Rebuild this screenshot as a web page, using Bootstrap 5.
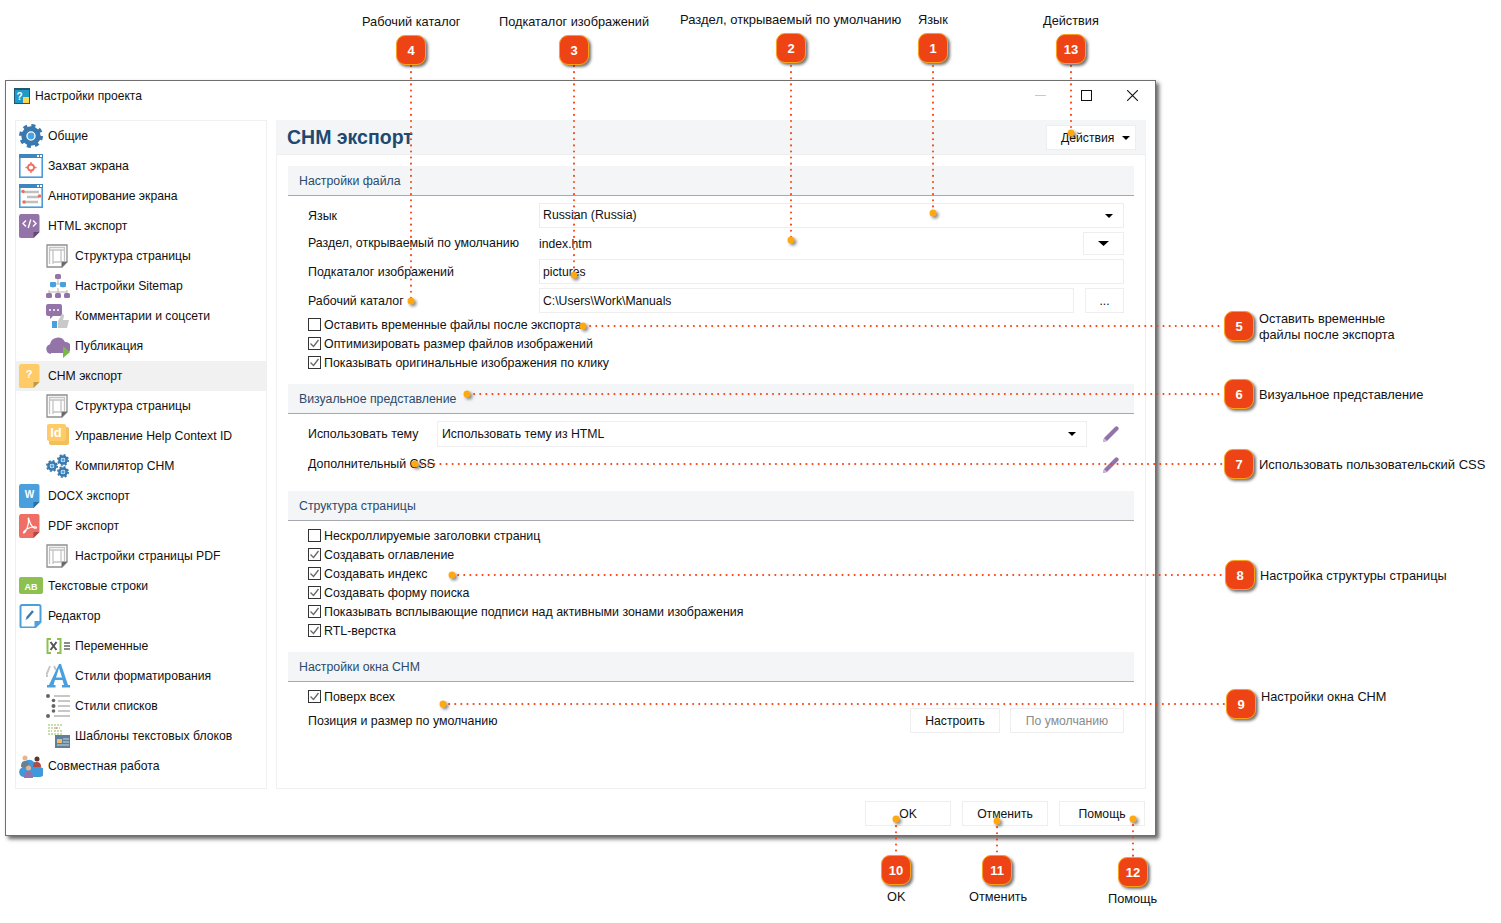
<!DOCTYPE html>
<html lang="ru">

<head>
  <meta charset="UTF-8">
  <title>Настройки проекта</title>
  <link href="https://cdn.jsdelivr.net/npm/bootstrap@5.3.3/dist/css/bootstrap.min.css" rel="stylesheet">
  <style>
    html, body { height: 923px; overflow: hidden; background: #fff; }
    body { position: relative; margin: 0; font-family: "Liberation Sans", Arial, sans-serif; font-size: 12.1px; color: #111; }

    /* dialog */
    .dlg { width: 1151px; height: 756px; margin: 80px 0 0 5px; background: #fff; border: 1px solid #6f6f6f; box-shadow: 3px 3px 4px rgba(0, 0, 0, .6); }
    .dlg-title { height: 39px; padding: 0 17px 9px 8px; }
    .dlg-title .ttl-ico { width: 16px; height: 16px; margin-right: 5px; }
    .wnd-btn { width: 11px; height: 11px; margin: 0 0 2px 35px; }
    .dlg-body { height: 669px; padding-left: 9px; gap: 9px; }
    .dlg-foot { padding: 12px 10px 0 0; gap: 11px; }
    .dlg-foot .btn { width: 86px; }

    /* left tree */
    .side { width: 252px; border: 1px solid #f0f0f0; }
    .side .list-group-item { height: 30px; padding: 0 0 0 3px; border: 0; background: transparent; color: #111; font-size: 12.2px; gap: 5px; }
    .side .list-group-item.sub { padding-left: 30px; }
    .side .list-group-item.cur { background: #f1f1f1; }
    .side svg { width: 24px; height: 24px; flex: none; }

    /* right panel */
    .pane { width: 870px; border: 1px solid #f0f0f0; border-top: 0; font-size: 12.4px; }
    .pane-head { height: 35px; margin: 0 -1px; padding: 0 10px; background: #f4f5f7; border-bottom: 1px solid #eee; }
    .pane-head h1 { margin: 1px 0 0 1px; font-size: 19.5px; font-weight: 700; color: #1f4a6f; font-family: "Liberation Sans", Arial, sans-serif; }
    .pane-body { padding: 11px 11px 0; }
    .sec-head { height: 30px; padding-left: 11px; background: #f4f5f7; border-bottom: 1px solid #a5a8ad; color: #2b4a6b; line-height: 30px; font-size: 12.3px; }
    .sec { padding: 0 10px 12px 20px; }
    .sec-a { padding-top: 7px; }
    .sec-b { padding-top: 5px; }
    .frow { min-height: 25px; margin-bottom: 4px; }
    .frow.short { min-height: 23px; }
    .frow.last { margin-bottom: 2px; }
    .lbl-w { width: 231px; flex: none; padding-top: 2px; }
    .lbl-w.raz { padding-top: 0; }
    .lbl-n { width: 129px; flex: none; }
    .css-row { margin-top: 5px; margin-bottom: 2px; }

    .form-control, .form-select { height: 25px; min-height: 25px; padding: 0 3px; border: 1px solid #eee; border-radius: 0; font-size: 12.2px; color: #111; font-family: inherit; box-shadow: none; }
    .form-select { font-size: 12.3px; padding-right: 20px; background-size: 8px 4px; background-position: right 10px center; background-image: url("data:image/svg+xml,%3csvg xmlns='http://www.w3.org/2000/svg' viewBox='0 0 8 4'%3e%3cpath d='M0 0h8L4 4z' fill='%23000'/%3e%3c/svg%3e"); }
    .form-control.plain { border: 0; padding-left: 0; height: 23px; min-height: 23px; }
    .sel-theme { height: 26px; padding-left: 4px; }
    .btn-flat { height: 25px; padding: 1px 0 0; border: 1px solid #eee; border-radius: 0; background: #fff; color: #111; font-size: 12.2px; line-height: 22px; }
    .btn-flat:disabled { opacity: 1; color: #8a8a8a; border-color: #eee; }
    .btn-drop { width: 41px; height: 23px; padding: 0; }
    .btn-drop svg { width: 11px; height: 5px; display: block; margin: 0 auto; }
    .btn-more { width: 39px; margin-left: 11px; }
    .btn-act { width: 90px; background: #fff; padding-left: 14px; text-align: left; }
    .btn-act svg { width: 8px; height: 4px; margin: 0 0 1px 8px; }
    .btn-cfg { width: 90px; }
    .btn-def { width: 114px; margin-left: 10px; }
    .pen { width: 18px; height: 18px; flex: none; margin: 0 4px 0 15px; }
    .chk { height: 19px; gap: 3px; padding-top: 2px; }
    .chk .form-check-input { width: 13px; height: 13px; margin: -2px 0 0; border: 1px solid #333; border-radius: 0; background-size: 11px 11px; box-shadow: none; }
    .chk .form-check-input:checked { background-color: #fff; border-color: #333; background-image: url("data:image/svg+xml,%3csvg xmlns='http://www.w3.org/2000/svg' viewBox='0 0 11 11'%3e%3cpath d='M1.5 5.5l3 3 5-6.5' fill='none' stroke='%23666' stroke-width='1.3'/%3e%3c/svg%3e"); }
    .pos-row { margin-top: 2px; }
    .pos-row > span { padding-top: 1px; }

    /* callouts lying over the screenshot */
    .ln-layer { position: absolute; left: 0; top: 0; width: 1501px; height: 923px; pointer-events: none; }
    .ln-layer line { stroke: #ff3f10; stroke-width: 2; stroke-linecap: round; stroke-dasharray: .1 6; }
    .ln-layer circle { fill: #ffa80f; filter: drop-shadow(2px 2px 1.5px rgba(0, 0, 0, .45)); }
    .mk { position: absolute; width: 30px; height: 30px; border: 1px solid #f9a11b; border-radius: 9px; background: #ee4415; color: #fff; font-weight: 700; font-size: 13px; padding-top: 1px; box-shadow: 2px 2px 3px rgba(0, 0, 0, .55); }
    .cp { position: absolute; font-size: 12.75px; line-height: 16px; color: #111; white-space: nowrap; }

    .mk-1 { left: 918px; top: 33px; } .mk-2 { left: 776px; top: 33px; } .mk-3 { left: 559px; top: 35px; } .mk-4 { left: 396px; top: 35px; }
    .mk-5 { left: 1224px; top: 311px; } .mk-6 { left: 1224px; top: 379px; } .mk-7 { left: 1224px; top: 449px; } .mk-8 { left: 1225px; top: 560px; }
    .mk-9 { left: 1226px; top: 689px; } .mk-10 { left: 881px; top: 855px; } .mk-11 { left: 982px; top: 855px; } .mk-12 { left: 1118px; top: 857px; } .mk-13 { left: 1056px; top: 34px; }

    .cp-1 { left: 918px; top: 12px; } .cp-2 { left: 680px; top: 12px; font-size: 13px; } .cp-3 { left: 499px; top: 14px; } .cp-4 { left: 362px; top: 14px; }
    .cp-5 { left: 1259px; top: 311px; } .cp-6 { left: 1259px; top: 387px; font-size: 12.85px; } .cp-7 { left: 1259px; top: 457px; font-size: 13px; } .cp-8 { left: 1260px; top: 568px; }
    .cp-9 { left: 1261px; top: 689px; } .cp-10 { left: 887px; top: 889px; } .cp-11 { left: 969px; top: 889px; } .cp-12 { left: 1108px; top: 891px; } .cp-13 { left: 1043px; top: 13px; }
  </style>
</head>

<body>
  <!-- общие иконки -->
  <svg width="0" height="0" class="d-block position-absolute">
    <defs>
      <symbol id="i-gear" viewBox="0 0 24 24">
        <circle cx="12" cy="12" r="7.2" fill="none" stroke="#3a78ad" stroke-width="5"/>
        <circle cx="12" cy="12" r="10.3" fill="none" stroke="#3a78ad" stroke-width="3.4" stroke-dasharray="4 4.09"/>
        <circle cx="12" cy="12" r="3.4" fill="#4aa3e4"/>
      </symbol>
      <symbol id="i-shot" viewBox="0 0 24 24">
        <rect x=".8" y=".8" width="22.400" height="22.400" fill="#fff" stroke="#4a9bd9" stroke-width="1.600"/>
        <rect x="0" y="0" width="24" height="4" fill="#3f86bd"/>
        <rect x="18" y="1" width="2" height="2" fill="#fff"/><rect x="21" y="1" width="2" height="2" fill="#fff"/>
        <path d="M12 8v11M6.500 13.500h11" stroke="#f0705f" stroke-width="1.400"/>
        <circle cx="12" cy="13.500" r="3" fill="#fff" stroke="#f0705f" stroke-width="1.800"/>
      </symbol>
      <symbol id="i-annot" viewBox="0 0 24 24">
        <rect x=".8" y=".8" width="22.400" height="22.400" fill="#fff" stroke="#4a9bd9" stroke-width="1.600"/>
        <rect x="0" y="0" width="24" height="4" fill="#3f86bd"/>
        <rect x="18" y="1" width="2" height="2" fill="#fff"/><rect x="21" y="1" width="2" height="2" fill="#fff"/>
        <path d="M4 8h16M8 13h12M5 18h14" stroke="#c0c0c0" stroke-width="2.600"/>
        <circle cx="4" cy="7.500" r="1.800" fill="#f0705f"/><circle cx="20.500" cy="12" r="1.800" fill="#f0705f"/><circle cx="5" cy="18" r="1.800" fill="#f0705f"/>
      </symbol>
      <symbol id="i-html" viewBox="0 0 24 24">
        <path d="M1.500 0h17a2 2 0 0 1 2 2v16l-6 6H2a2 2 0 0 1-2-2V1.500z" fill="#9474a8"/>
        <path d="M14.500 24v-6h6z" fill="#5f4a6c"/>
        <path d="M7 6.500L4 9.500l3 3M14 6.500l3 3-3 3M11.800 5.500l-2.600 8.500" fill="none" stroke="#fff" stroke-width="1.400"/>
      </symbol>
      <symbol id="i-page" viewBox="0 0 24 24">
        <path d="M1 1h20v17l-5 5H1z" fill="#fff" stroke="#8e8e8e" stroke-width="1.300"/>
        <path d="M3.500 3.500h15v2.500h-15zM3.500 6v14M7 6v14M15 6v12M18.500 6v11M7 18h8" fill="none" stroke="#c4c4c4" stroke-width="1.300"/>
        <path d="M15.500 23.500v-6h6z" fill="#6a6a6a"/>
      </symbol>
      <symbol id="i-sitemap" viewBox="0 0 24 24">
        <path d="M12 5v5M7 10h10M7 10v4M17 10v4M3 18h18M3 16v3M12 14v6M21 16v3" fill="none" stroke="#b5b5b5"/>
        <rect x="9" y="0" width="6" height="5" rx="1.500" fill="#9474a8"/>
        <rect x="4" y="8" width="6" height="5" rx="1" fill="#4a9fdd"/><rect x="14" y="8" width="6" height="5" rx="1" fill="#4a9fdd"/>
        <rect x="0" y="19" width="6" height="5" rx="1.500" fill="#9474a8"/><rect x="9" y="19" width="6" height="5" rx="1.500" fill="#9474a8"/><rect x="18" y="19" width="6" height="5" rx="1.500" fill="#9474a8"/>
      </symbol>
      <symbol id="i-comm" viewBox="0 0 24 24">
        <path d="M2 0h12a2 2 0 0 1 2 2v8a2 2 0 0 1-2 2H7l-3 3v-3H2a2 2 0 0 1-2-2V2a2 2 0 0 1 2-2z" fill="#9474a8"/>
        <circle cx="4" cy="6" r="1" fill="#fff"/><circle cx="8" cy="6" r="1" fill="#fff"/><circle cx="12" cy="6" r="1" fill="#fff"/>
        <rect x="6" y="17" width="5" height="7" fill="#4a9fdd"/>
        <path d="M12 17l4-7c1.500 0 2 1 2 2l-1 4h6l-2 8H12z" fill="#c9c9c9"/>
      </symbol>
      <symbol id="i-cloud" viewBox="0 0 24 24">
        <path d="M5 20a5 5 0 0 1-1-9.800A8 8 0 0 1 19 8a5.500 5.500 0 0 1 1 11H5z" fill="#9474a8"/>
        <path d="M17 12l7 6-7 6z" fill="#7ab648"/>
      </symbol>
      <symbol id="i-chm" viewBox="0 0 24 24">
        <path d="M1.500 0h17a2 2 0 0 1 2 2v16l-6 6H2a2 2 0 0 1-2-2V1.500z" fill="#ffcb66"/>
        <path d="M14.500 24v-6h6z" fill="#b99a55"/>
        <text x="10" y="14" text-anchor="middle" font-family="Liberation Sans, sans-serif" font-size="11" font-weight="700" fill="#fff">?</text>
      </symbol>
      <symbol id="i-id" viewBox="0 0 24 24">
        <rect x="3" y="3" width="20" height="18" rx="2" fill="#f3bf5e"/>
        <rect x="1" y="0" width="19" height="17" rx="2" fill="#ffcb66"/>
        <text x="10" y="13" text-anchor="middle" font-family="Liberation Sans, sans-serif" font-size="13" font-weight="700" fill="#fff">Id</text>
      </symbol>
      <symbol id="i-gears" viewBox="0 0 24 24">
        <use href="#i-gear" x="0" y="6" width="12" height="12"/>
        <use href="#i-gear" x="11" y="0" width="12" height="12"/>
        <use href="#i-gear" x="11" y="12" width="12" height="12"/>
      </symbol>
      <symbol id="i-docx" viewBox="0 0 24 24">
        <path d="M1.500 0h17a2 2 0 0 1 2 2v16l-6 6H2a2 2 0 0 1-2-2V1.500z" fill="#4a9fdd"/>
        <path d="M14.500 24v-6h6z" fill="#2f6f9f"/>
        <text x="10.500" y="14" text-anchor="middle" font-family="Liberation Sans, sans-serif" font-size="10" font-weight="700" fill="#fff">W</text>
      </symbol>
      <symbol id="i-pdf" viewBox="0 0 24 24">
        <path d="M1.500 0h17a2 2 0 0 1 2 2v16l-6 6H2a2 2 0 0 1-2-2V1.500z" fill="#ef6f66"/>
        <path d="M14.500 24v-6h6z" fill="#a84a44"/>
        <path d="M9.500 4c1 3 1.500 7 5 9.500 1.500 1 3 1 3 0s-3-1-6 0-6.500 3.500-7 5c-.5 1 1 .5 2-1s3-7 3-10c0-2-.500-3.500 0-3.500z" fill="none" stroke="#fff" stroke-width="1.200"/>
      </symbol>
      <symbol id="i-ab" viewBox="0 0 24 24">
        <rect x="0" y="3" width="24" height="17" rx="2" fill="#8cc152"/>
        <text x="12" y="15.500" text-anchor="middle" font-family="Liberation Sans, sans-serif" font-size="9" font-weight="700" fill="#fff">AB</text>
      </symbol>
      <symbol id="i-edit" viewBox="0 0 24 24">
        <path d="M3 1h17a1.500 1.500 0 0 1 1.500 1.500V18L16 23.500H3A1.500 1.500 0 0 1 1.500 22V2.500A1.500 1.500 0 0 1 3 1z" fill="#fff" stroke="#4a9fdd" stroke-width="2"/>
        <path d="M15.500 23v-6h6z" fill="#4a9fdd"/>
        <path d="M8 14l6-7" stroke="#3a78ad" stroke-width="2.400"/><path d="M6.500 16l1-2.500 1.500 1.300z" fill="#3a78ad"/>
      </symbol>
      <symbol id="i-var" viewBox="0 0 24 24">
        <path d="M5 5H1.500v14H5M11 5h3.500v14H11" fill="none" stroke="#8cc152" stroke-width="2"/>
        <path d="M4.500 8l6 8M10.500 8l-6 8" stroke="#555" stroke-width="2"/>
        <path d="M18 9h6M18 12h6M18 15h6" stroke="#666" stroke-width="1.700"/>
      </symbol>
      <symbol id="i-font" viewBox="0 0 24 24">
        <path d="M4 2L0 12h2M8 2l2 4" fill="none" stroke="#c6c6c6" stroke-width="2"/>
        <path d="M13 0h2l7 21h2v2.500h-8V21h2l-1.500-5H9l-1.500 5h2v2.500H1V21h2zM10 13.500h6L13 4z" fill="#4a9fdd" fill-rule="evenodd"/>
      </symbol>
      <symbol id="i-list" viewBox="0 0 24 24">
        <circle cx="2" cy="2" r="2" fill="#666"/><circle cx="7.500" cy="12" r="2" fill="#666"/><circle cx="7.500" cy="6.500" r="1.800" fill="#666"/><circle cx="7.500" cy="17" r="1.800" fill="#666"/><circle cx="2" cy="22" r="2" fill="#666"/>
        <path d="M8 2h16M12 7h12M12 12h12M12 17h12M8 22h16" stroke="#b5b5b5" stroke-width="1.500"/>
      </symbol>
      <symbol id="i-tpl" viewBox="0 0 24 24">
        <rect x="2" y="0" width="16" height="12" fill="#fff"/>
        <path d="M2 1h14M2 4h5M10 4h4M2 7h4M8 7h8M2 10h14" stroke="#8cc152" stroke-dasharray="2 1"/>
        <path d="M8 4h3" stroke="#f0705f"/>
        <rect x="9" y="11" width="15" height="13" fill="#5f7f9c"/>
        <rect x="11" y="15" width="5" height="4" fill="#f3bf5e"/>
        <path d="M17 15h6M17 18h6M11 21h12" stroke="#cfd8e0"/>
      </symbol>
      <symbol id="i-team" viewBox="0 0 24 24">
        <path d="M5 23a5 5 0 0 1-2-9.500A7 7 0 0 1 15 8a5.500 5.500 0 0 1 6 5 5 5 0 0 1-1 10z" fill="#3f97dc"/>
        <circle cx="6" cy="4" r="2.500" fill="#e8b48c"/><path d="M2 13c0-4 1-6 4-6s4 2 4 6z" fill="#6d7f8d"/>
        <circle cx="18" cy="5" r="2.500" fill="#5b3a2e"/><path d="M14 13c0-3 1-5 4-5s4 2 4 5z" fill="#b5483f"/>
        <circle cx="9.500" cy="14" r="2.500" fill="#e8b48c"/><path d="M5 24c0-4 1.500-7 4.500-7s4.500 3 4.500 7z" fill="#9474a8"/>
      </symbol>
      <symbol id="i-pen" viewBox="0 0 18 18">
        <path d="M1 17l1-4L13 2c1-1 2-1 3 0s1 2 0 3L5 16z" fill="#9474a8"/>
        <path d="M1 17l1-4 3 3z" fill="#cdbcd8"/>
      </symbol>
    </defs>
  </svg>

  <div class="dlg d-flex flex-column">
    <div class="dlg-title d-flex align-items-center">
      <svg class="ttl-ico" viewBox="0 0 16 16">
        <rect x=".5" y=".5" width="15" height="15" fill="#1e9bc9" stroke="#22586f"/>
        <rect x="0" y="0" width="16" height="2" fill="#22586f"/>
        <text x="5.500" y="11.500" text-anchor="middle" font-family="Liberation Sans, sans-serif" font-size="10" font-weight="700" fill="#fff">?</text>
        <path d="M9 9h6v6H9z" fill="#ffd84a"/>
      </svg>
      <span class="flex-grow-1">Настройки проекта</span>
      <svg class="wnd-btn" viewBox="0 0 11 11"><path d="M0 5.500h11" stroke="#c8c8c8"/></svg>
      <svg class="wnd-btn" viewBox="0 0 11 11"><rect x=".5" y=".5" width="10" height="10" fill="none" stroke="#111"/></svg>
      <svg class="wnd-btn" viewBox="0 0 11 11"><path d="M0 0l11 11M11 0L0 11" stroke="#111" stroke-width="1.100"/></svg>
    </div>

    <div class="dlg-body d-flex">
      <div class="side list-group list-group-flush rounded-0">
        <div class="list-group-item d-flex align-items-center"><svg><use href="#i-gear"/></svg>Общие</div>
        <div class="list-group-item d-flex align-items-center"><svg><use href="#i-shot"/></svg>Захват экрана</div>
        <div class="list-group-item d-flex align-items-center"><svg><use href="#i-annot"/></svg>Аннотирование экрана</div>
        <div class="list-group-item d-flex align-items-center"><svg><use href="#i-html"/></svg>HTML экспорт</div>
        <div class="list-group-item sub d-flex align-items-center"><svg><use href="#i-page"/></svg>Структура страницы</div>
        <div class="list-group-item sub d-flex align-items-center"><svg><use href="#i-sitemap"/></svg>Настройки Sitemap</div>
        <div class="list-group-item sub d-flex align-items-center"><svg><use href="#i-comm"/></svg>Комментарии и соцсети</div>
        <div class="list-group-item sub d-flex align-items-center"><svg><use href="#i-cloud"/></svg>Публикация</div>
        <div class="list-group-item cur d-flex align-items-center"><svg><use href="#i-chm"/></svg>CHM экспорт</div>
        <div class="list-group-item sub d-flex align-items-center"><svg><use href="#i-page"/></svg>Структура страницы</div>
        <div class="list-group-item sub d-flex align-items-center"><svg><use href="#i-id"/></svg>Управление Help Context ID</div>
        <div class="list-group-item sub d-flex align-items-center"><svg><use href="#i-gears"/></svg>Компилятор CHM</div>
        <div class="list-group-item d-flex align-items-center"><svg><use href="#i-docx"/></svg>DOCX экспорт</div>
        <div class="list-group-item d-flex align-items-center"><svg><use href="#i-pdf"/></svg>PDF экспорт</div>
        <div class="list-group-item sub d-flex align-items-center"><svg><use href="#i-page"/></svg>Настройки страницы PDF</div>
        <div class="list-group-item d-flex align-items-center"><svg><use href="#i-ab"/></svg>Текстовые строки</div>
        <div class="list-group-item d-flex align-items-center"><svg><use href="#i-edit"/></svg>Редактор</div>
        <div class="list-group-item sub d-flex align-items-center"><svg><use href="#i-var"/></svg>Переменные</div>
        <div class="list-group-item sub d-flex align-items-center"><svg><use href="#i-font"/></svg>Стили форматирования</div>
        <div class="list-group-item sub d-flex align-items-center"><svg><use href="#i-list"/></svg>Стили списков</div>
        <div class="list-group-item sub d-flex align-items-center"><svg><use href="#i-tpl"/></svg>Шаблоны текстовых блоков</div>
        <div class="list-group-item d-flex align-items-center"><svg><use href="#i-team"/></svg>Совместная работа</div>
      </div>

      <div class="pane">
        <div class="pane-head d-flex align-items-center justify-content-between">
          <h1>CHM экспорт</h1>
          <button type="button" class="btn btn-flat btn-act">Действия<svg viewBox="0 0 8 4"><path d="M0 0h8L4 4z" fill="#000"/></svg></button>
        </div>
        <div class="pane-body">
          <div class="sec-head">Настройки файла</div>
          <div class="sec sec-a">
            <div class="frow d-flex align-items-center">
              <span class="lbl-w">Язык</span>
              <select class="form-select"><option>Russian (Russia)</option></select>
            </div>
            <div class="frow short d-flex align-items-center">
              <span class="lbl-w raz">Раздел, открываемый по умолчанию</span>
              <input class="form-control plain" value="index.htm">
              <button type="button" class="btn btn-flat btn-drop flex-shrink-0"><svg viewBox="0 0 11 5"><path d="M0 0h11L5.500 5z" fill="#000"/></svg></button>
            </div>
            <div class="frow d-flex align-items-center">
              <span class="lbl-w">Подкаталог изображений</span>
              <input class="form-control" value="pictures">
            </div>
            <div class="frow last d-flex align-items-center">
              <span class="lbl-w">Рабочий каталог</span>
              <input class="form-control" value="C:\Users\Work\Manuals">
              <button type="button" class="btn btn-flat btn-more flex-shrink-0">...</button>
            </div>
            <label class="chk d-flex align-items-center"><input type="checkbox" class="form-check-input">Оставить временные файлы после экспорта</label>
            <label class="chk d-flex align-items-center"><input type="checkbox" class="form-check-input" checked>Оптимизировать размер файлов изображений</label>
            <label class="chk d-flex align-items-center"><input type="checkbox" class="form-check-input" checked>Показывать оригинальные изображения по клику</label>
          </div>

          <div class="sec-head">Визуальное представление</div>
          <div class="sec sec-a">
            <div class="d-flex align-items-center">
              <span class="lbl-n">Использовать тему</span>
              <select class="form-select sel-theme"><option>Использовать тему из HTML</option></select>
              <svg class="pen"><use href="#i-pen"/></svg>
            </div>
            <div class="frow css-row d-flex align-items-center">
              <span class="flex-grow-1">Дополнительный CSS</span>
              <svg class="pen"><use href="#i-pen"/></svg>
            </div>
          </div>

          <div class="sec-head">Структура страницы</div>
          <div class="sec sec-b">
            <label class="chk d-flex align-items-center"><input type="checkbox" class="form-check-input">Нескроллируемые заголовки страниц</label>
            <label class="chk d-flex align-items-center"><input type="checkbox" class="form-check-input" checked>Создавать оглавление</label>
            <label class="chk d-flex align-items-center"><input type="checkbox" class="form-check-input" checked>Создавать индекс</label>
            <label class="chk d-flex align-items-center"><input type="checkbox" class="form-check-input" checked>Создавать форму поиска</label>
            <label class="chk d-flex align-items-center"><input type="checkbox" class="form-check-input" checked>Показывать всплывающие подписи над активными зонами изображения</label>
            <label class="chk d-flex align-items-center"><input type="checkbox" class="form-check-input" checked>RTL-верстка</label>
          </div>

          <div class="sec-head">Настройки окна CHM</div>
          <div class="sec sec-b">
            <label class="chk d-flex align-items-center"><input type="checkbox" class="form-check-input" checked>Поверх всех</label>
            <div class="pos-row d-flex align-items-center">
              <span class="flex-grow-1">Позиция и размер по умолчанию</span>
              <button type="button" class="btn btn-flat btn-cfg">Настроить</button>
              <button type="button" class="btn btn-flat btn-def" disabled>По умолчанию</button>
            </div>
          </div>
        </div>
      </div>
    </div>

    <div class="dlg-foot d-flex justify-content-end">
      <button type="button" class="btn btn-flat">OK</button>
      <button type="button" class="btn btn-flat">Отменить</button>
      <button type="button" class="btn btn-flat">Помощь</button>
    </div>
  </div>

  <!-- выноски поверх окна -->
  <svg class="ln-layer" viewBox="0 0 1501 923">
    <line x1="411" y1="66" x2="411" y2="301"/><circle cx="411" cy="301" r="3.500"/>
    <line x1="574" y1="66" x2="574" y2="275"/><circle cx="574" cy="275" r="3.500"/>
    <line x1="791" y1="66" x2="791" y2="240"/><circle cx="791" cy="240" r="3.500"/>
    <line x1="933" y1="66" x2="933" y2="213"/><circle cx="933" cy="213" r="3.500"/>
    <line x1="1071" y1="66" x2="1071" y2="133"/><circle cx="1071" cy="133" r="3.500"/>
    <line x1="584" y1="326" x2="1224" y2="326"/><circle cx="583" cy="326" r="3.500"/>
    <line x1="468" y1="394" x2="1224" y2="394"/><circle cx="467" cy="394" r="3.500"/>
    <line x1="416" y1="464" x2="1224" y2="464"/><circle cx="415" cy="464" r="3.500"/>
    <line x1="452" y1="575" x2="1225" y2="575"/><circle cx="452" cy="575" r="3.500"/>
    <line x1="443" y1="704" x2="1226" y2="704"/><circle cx="443" cy="704" r="3.500"/>
    <line x1="896" y1="820" x2="896" y2="855"/><circle cx="896" cy="819" r="3.500"/>
    <line x1="997" y1="821" x2="997" y2="855"/><circle cx="997" cy="821" r="3.500"/>
    <line x1="1133" y1="819" x2="1133" y2="857"/><circle cx="1133" cy="819" r="3.500"/>
  </svg>

  <div class="mk mk-1 d-flex align-items-center justify-content-center">1</div>
  <div class="mk mk-2 d-flex align-items-center justify-content-center">2</div>
  <div class="mk mk-3 d-flex align-items-center justify-content-center">3</div>
  <div class="mk mk-4 d-flex align-items-center justify-content-center">4</div>
  <div class="mk mk-5 d-flex align-items-center justify-content-center">5</div>
  <div class="mk mk-6 d-flex align-items-center justify-content-center">6</div>
  <div class="mk mk-7 d-flex align-items-center justify-content-center">7</div>
  <div class="mk mk-8 d-flex align-items-center justify-content-center">8</div>
  <div class="mk mk-9 d-flex align-items-center justify-content-center">9</div>
  <div class="mk mk-10 d-flex align-items-center justify-content-center">10</div>
  <div class="mk mk-11 d-flex align-items-center justify-content-center">11</div>
  <div class="mk mk-12 d-flex align-items-center justify-content-center">12</div>
  <div class="mk mk-13 d-flex align-items-center justify-content-center">13</div>

  <div class="cp cp-1">Язык</div>
  <div class="cp cp-2">Раздел, открываемый по умолчанию</div>
  <div class="cp cp-3">Подкаталог изображений</div>
  <div class="cp cp-4">Рабочий каталог</div>
  <div class="cp cp-5">Оставить временные<br>файлы после экспорта</div>
  <div class="cp cp-6">Визуальное представление</div>
  <div class="cp cp-7">Использовать пользовательский CSS</div>
  <div class="cp cp-8">Настройка структуры страницы</div>
  <div class="cp cp-9">Настройки окна CHM</div>
  <div class="cp cp-10">OK</div>
  <div class="cp cp-11">Отменить</div>
  <div class="cp cp-12">Помощь</div>
  <div class="cp cp-13">Действия</div>

  <script src="https://cdn.jsdelivr.net/npm/bootstrap@5.3.3/dist/js/bootstrap.bundle.min.js"></script>
</body>

</html>
